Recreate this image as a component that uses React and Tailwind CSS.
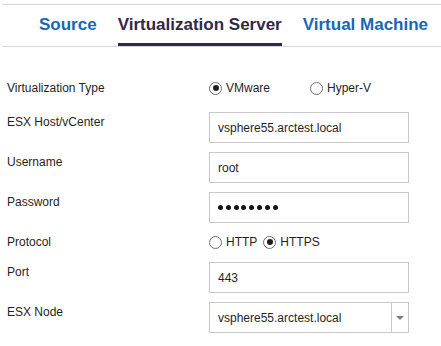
import React from 'react'

function Radio({ checked, label, className = '' }) {
    return (
        <span className={`flex items-center ${className}`}>
            <span className="w-[13px] h-[13px] rounded-full border border-[#6f6f6f] bg-white flex items-center justify-center">
                {checked && <span className="w-[6px] h-[6px] rounded-full bg-[#1e1e1e]"></span>}
            </span>
            <span className="ml-[4px]">{label}</span>
        </span>
    )
}

function Row({ label, children, className = '' }) {
    return (
        <div className={`flex items-start ${className}`}>
            <div className="w-[202px] pt-[2px] leading-4">{label}</div>
            {children}
        </div>
    )
}

function TextBox({ children }) {
    return (
        <div className="w-[200px] h-[31px] border border-[#c8c8c8] bg-white flex items-center pl-[8px] leading-4">
            {children}
        </div>
    )
}

export default function App() {
    const dots = [0, 1, 2, 3, 4, 5, 6, 7]
    return (
        <div className="w-[441px] h-[346px] bg-white pt-[4px] font-['Liberation_Sans',Arial,sans-serif] text-[12px] text-[#1f1f1f]">
            {/* tabs */}
            <div className="ml-[2px] border-t border-b border-[#d3d9e0] flex pl-[37px] gap-[21px] text-[17px] font-bold leading-5">
                <div className="pt-[10px] pb-[8px] border-b-[3px] border-transparent text-[#1767b3]">Source</div>
                <div className="pt-[10px] pb-[8px] border-b-[3px] border-[#2f2a45] text-[#2f2a45]">Virtualization Server</div>
                <div className="pt-[10px] pb-[8px] border-b-[3px] border-transparent text-[#1767b3]">Virtual Machine</div>
            </div>

            {/* form */}
            <div className="pl-[7px] pt-[33px] flex flex-col">
                <div className="flex items-center leading-4">
                    <div className="w-[202px]">Virtualization Type</div>
                    <Radio checked label="VMware" className="w-[101px]" />
                    <Radio label="Hyper-V" />
                </div>

                <Row label="ESX Host/vCenter" className="mt-[16px]">
                    <TextBox>vsphere55.arctest.local</TextBox>
                </Row>
                <Row label="Username" className="mt-[9px]">
                    <TextBox>root</TextBox>
                </Row>
                <Row label="Password" className="mt-[9px]">
                    <TextBox>
                        <span className="flex gap-[2.8px]">
                            {dots.map((d) => (
                                <span key={d} className="w-[5px] h-[5px] rounded-full bg-[#111]"></span>
                            ))}
                        </span>
                    </TextBox>
                </Row>

                <div className="flex items-center leading-4 mt-[11px]">
                    <div className="w-[202px]">Protocol</div>
                    <Radio label="HTTP" className="mr-[6px]" />
                    <Radio checked label="HTTPS" />
                </div>

                <Row label="Port" className="mt-[12px]">
                    <TextBox>443</TextBox>
                </Row>
                <Row label="ESX Node" className="mt-[9px]">
                    <div className="w-[200px] h-[31px] border border-[#c8c8c8] bg-white flex leading-4">
                        <div className="flex-1 flex items-center pl-[8px]">vsphere55.arctest.local</div>
                        <div className="w-[17px] border-l border-[#c8c8c8] flex items-center justify-center">
                            <svg width="8" height="4" viewBox="0 0 8 4">
                                <path d="M0 0 L8 0 L4 4 Z" fill="#7a7a7a" />
                            </svg>
                        </div>
                    </div>
                </Row>
            </div>
        </div>
    )
}
